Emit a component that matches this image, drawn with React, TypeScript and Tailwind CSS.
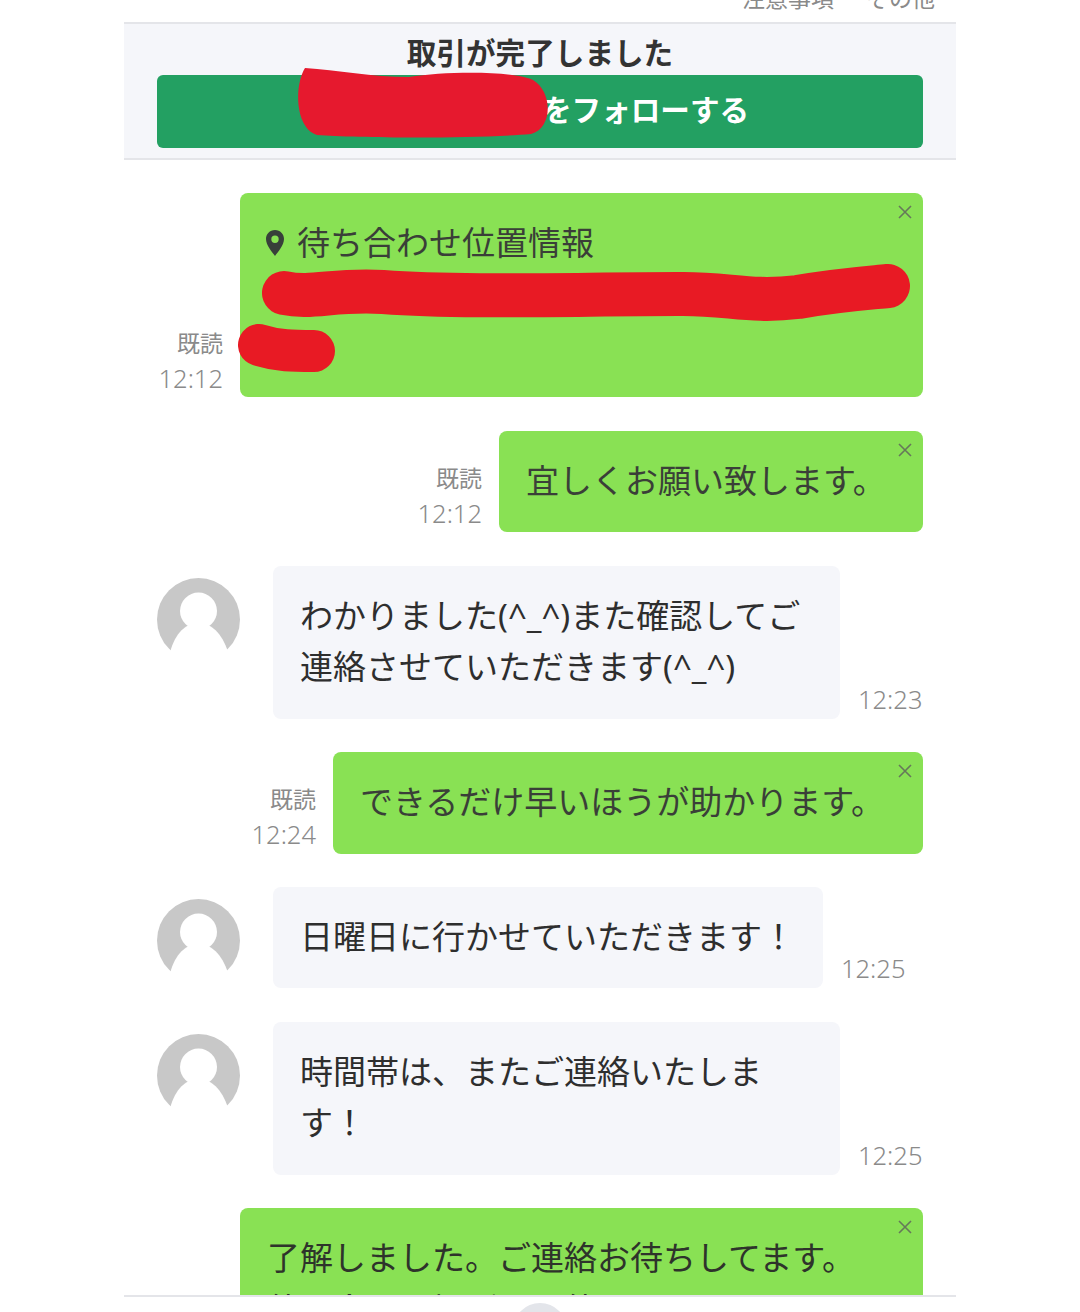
import React from 'react';

const fontStack = "font-['Noto_Sans','Noto_Sans_CJK_JP',sans-serif]";

function CloseMark() {
  return (
    <svg viewBox="0 0 16 16" className="absolute top-[11px] right-[10px] w-[16px] h-[16px] text-[#66785a]" fill="none" stroke="currentColor" strokeWidth="1.6">
      <path d="M2 2 L14 14 M14 2 L2 14" />
    </svg>
  );
}

function Avatar() {
  return (
    <svg viewBox="0 0 83 83" className="w-[83px] h-[83px] shrink-0">
      <circle cx="41.5" cy="41.5" r="41.5" fill="#c8c8c8" />
      <circle cx="41.5" cy="33" r="18.5" fill="#fff" />
      <path d="M14 71 C20 52 31 45 41.5 45 C52 45 63 52 70 71 L70 83 L14 83 Z" fill="#fff" />
    </svg>
  );
}

function ReadMeta({ time }: { time: string }) {
  return (
    <div className="flex flex-col items-end mr-[17px] mb-[1.5px] text-[#8a8a8a]">
      <span className="text-[23px] leading-[34px]">既読</span>
      <span className="text-[25.5px] leading-[36px] font-light">{time}</span>
    </div>
  );
}

function MyMessage({ time, width, children }: { time: string; width: string; children: React.ReactNode }) {
  return (
    <div className="flex justify-end items-end pr-[33px] mb-[33.5px]">
      <ReadMeta time={time} />
      <div className={`relative bg-[#89e154] rounded-[8px] px-[27px] pt-[24px] pb-[25.9px] text-[33px] leading-[51.5px] text-[#3a3f38] shrink-0 ${width}`}>
        <CloseMark />
        {children}
      </div>
    </div>
  );
}

function TheirMessage({ time, width, children }: { time: string; width: string; children: React.ReactNode }) {
  return (
    <div className="flex items-end pl-[33px] mb-[33.5px]">
      <div className="self-start mt-[12px] mr-[33px]">
        <Avatar />
      </div>
      <div className={`bg-[#f5f6fa] rounded-[8px] px-[27px] pt-[24px] pb-[25.9px] text-[33px] leading-[51.5px] text-[#2e2e2e] shrink-0 ${width}`}>
        {children}
      </div>
      <span className="ml-[18px] mb-[3px] text-[25.5px] leading-[34px] font-light text-[#8a8a8a]">{time}</span>
    </div>
  );
}

export default function App() {
  return (
    <div className={`h-[1312px] w-[1080px] bg-white overflow-hidden ${fontStack}`}>
      <div className="w-[832px] h-full mx-auto flex flex-col">
        <div className="h-[22px] shrink-0 overflow-hidden relative">
          <div className="flex justify-end gap-[32px] pr-[21px] -mt-[17px] text-[23px] leading-[30px] text-[#8a8a8a]">
            <span>注意事項</span>
            <span>その他</span>
          </div>
        </div>

        <div className="shrink-0 bg-[#f5f6fa] border-y-2 border-[#e4e5e9] h-[138px] px-[33px] pt-[10px]">
          <h2 className="text-center text-[29.6px] leading-[38px] font-bold text-[#333]">取引が完了しました</h2>
          <div className="relative mt-[3px] h-[73px] bg-[#23a062] rounded-[6px] flex items-center justify-center pb-[2px] text-[29.6px] font-bold text-white">
            <span className="pl-[385px] w-full">をフォローする</span>
            <svg viewBox="0 0 250 70" className="absolute -top-[7px] left-[140px] w-[250px] h-[70px] overflow-visible">
              <path d="M8 0 C40 2 75 9 112 9 C150 3 217 3 236 12 C256 24 256 60 234 66 C175 71 60 70 20 67 C-2 60 -3 18 8 0 Z" fill="#e6192e" />
            </svg>
          </div>
        </div>

        <div className="flex-1 min-h-0 overflow-hidden pt-[33px]">
          <MyMessage time="12:12" width="w-[683px]">
            <div className="flex items-center text-[33px] leading-[51.5px]">
              <svg viewBox="0 0 20 28" className="w-[20px] h-[28px] -ml-[2px] mr-[12px]">
                <path fillRule="evenodd" d="M10 1 C4.8 1 1 5 1 10 C1 16 7 23 10 27 C13 23 19 16 19 10 C19 5 15.2 1 10 1 Z M10 6.5 A3.7 3.7 0 1 1 10 13.9 A3.7 3.7 0 0 1 10 6.5 Z" fill="#38403a" />
              </svg>
              待ち合わせ位置情報
            </div>
            <div className="h-[103px]" />
            <svg viewBox="0 0 683 140" className="absolute left-[-2px] top-[68px] w-[683px] h-[140px] overflow-visible">
              <g fill="none" stroke="#e81a24" strokeLinecap="round" strokeLinejoin="round">
                <path d="M46 32 C75 38 95 28 145 31 C225 37 340 33 440 33 C490 32 510 42 560 36 C600 29 630 27 650 25" strokeWidth="44" />
                <path d="M21 84 C40 90 55 90 76 90" strokeWidth="42" />
              </g>
            </svg>
          </MyMessage>

          <MyMessage time="12:12" width="w-[424px]">宜しくお願い致します。</MyMessage>

          <TheirMessage time="12:23" width="w-[567px]">わかりました(^_^)また確認してご連絡させていただきます(^_^)</TheirMessage>

          <MyMessage time="12:24" width="w-[590px]">できるだけ早いほうが助かります。</MyMessage>

          <TheirMessage time="12:25" width="w-[550px]">日曜日に行かせていただきます！</TheirMessage>

          <TheirMessage time="12:25" width="w-[567px]">時間帯は、またご連絡いたします！</TheirMessage>

          <div className="flex justify-end pr-[33px]">
            <div className="relative bg-[#89e154] rounded-[8px] px-[27px] pt-[24px] pb-[25.9px] text-[33px] leading-[51.5px] text-[#2e332b] w-[683px] shrink-0">
              <CloseMark />
              了解しました。ご連絡お待ちしてます。
              <br />
              待ち合わせ場所でお待ちしております。
            </div>
          </div>
        </div>

        <div className="shrink-0 h-[17px] border-t-2 border-[#e4e5e9] bg-white overflow-hidden flex justify-center">
          <div className="w-[54px] h-[54px] mt-[6px] rounded-full bg-[#e3e5ea]" />
        </div>
      </div>
    </div>
  );
}
